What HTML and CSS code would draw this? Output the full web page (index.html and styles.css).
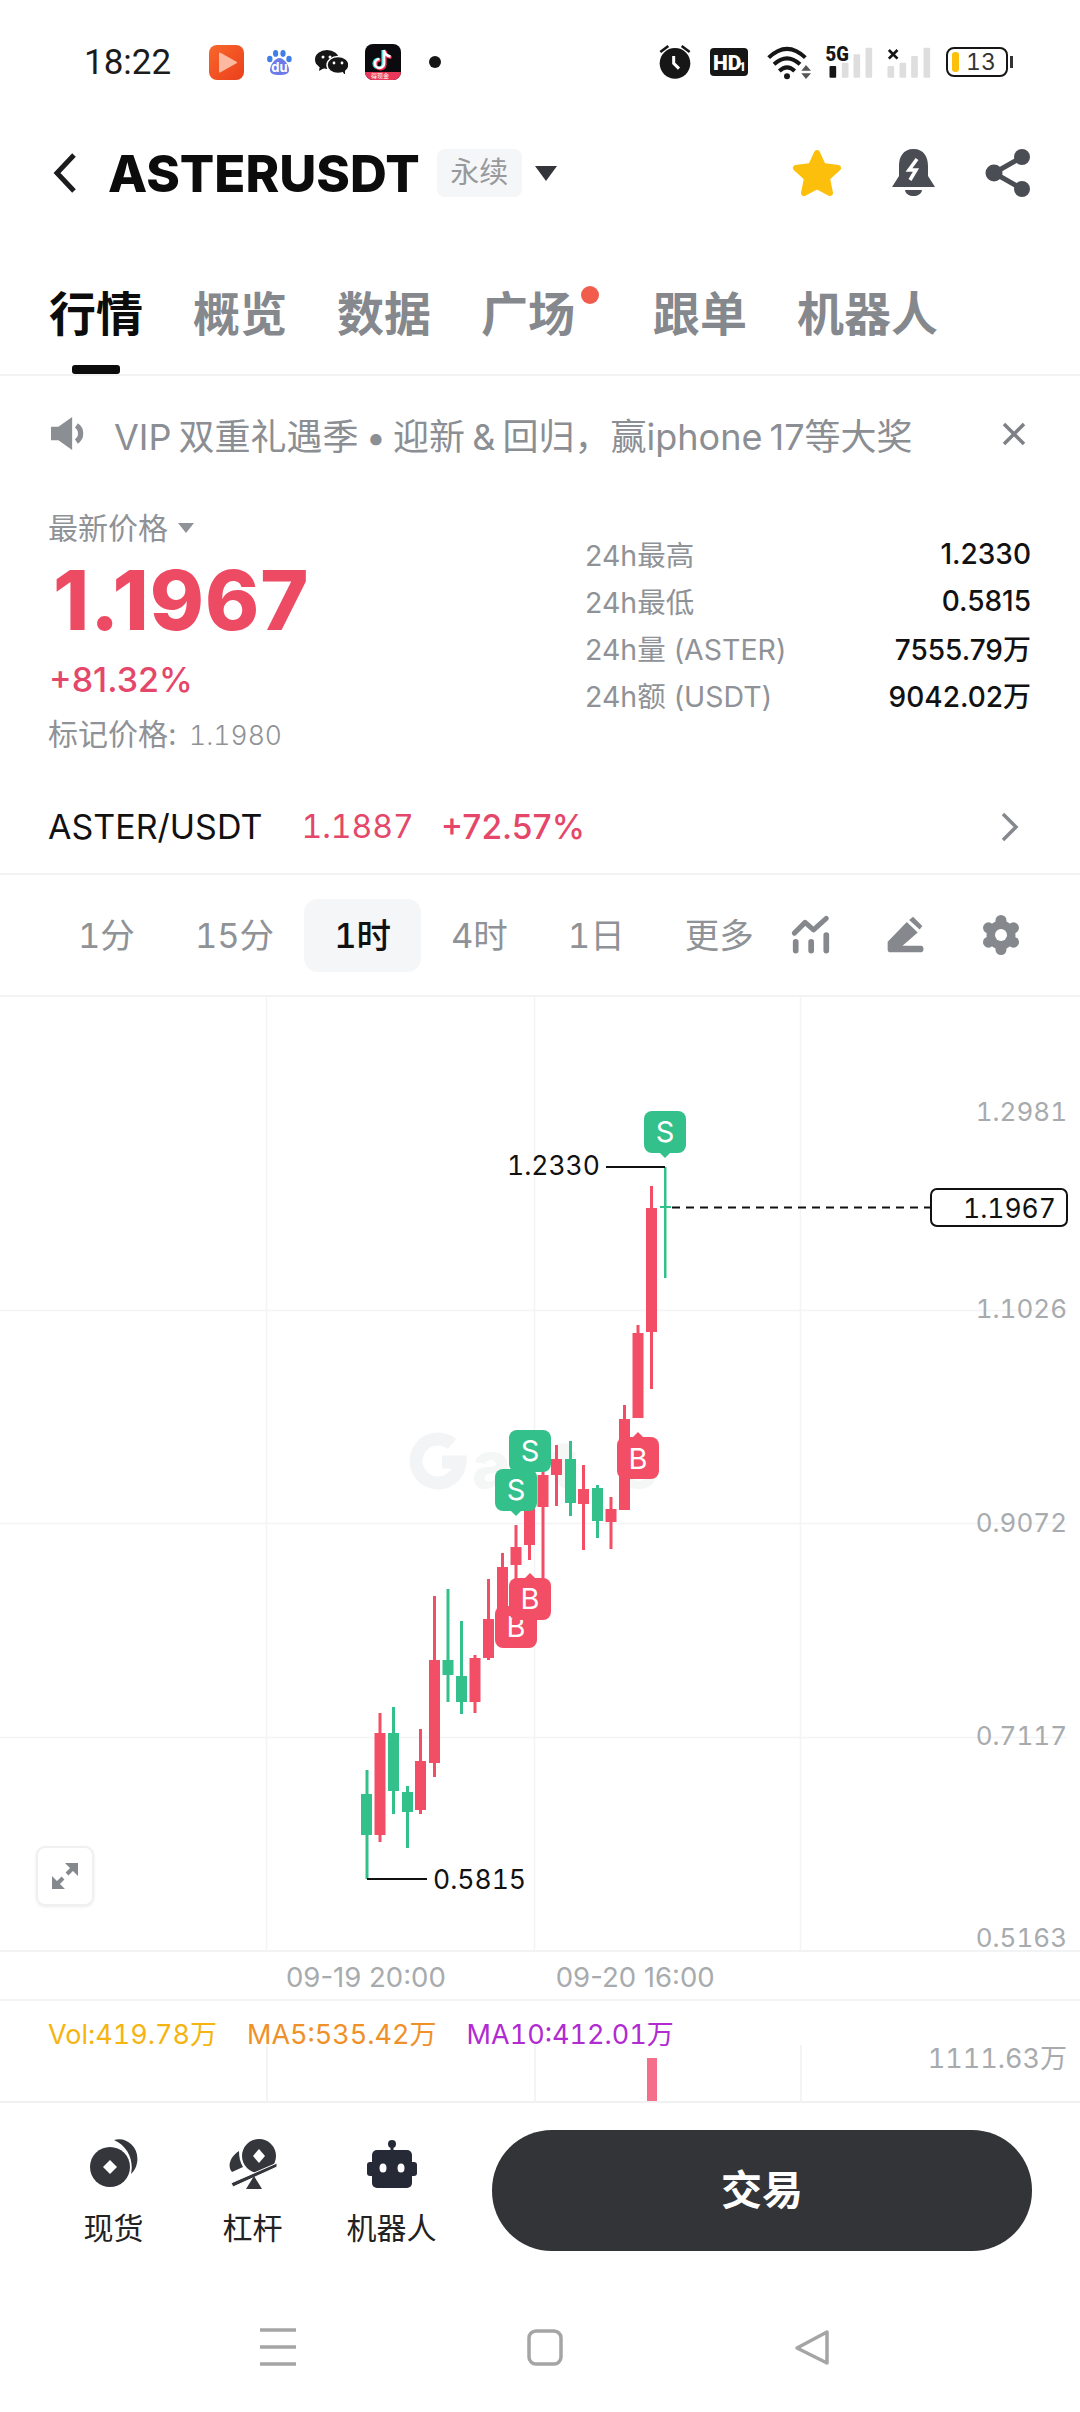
FILE: index.html
```html
<!DOCTYPE html>
<html>
<head>
    <meta charset="utf-8">
    <title>ASTERUSDT</title>
    <link rel="stylesheet" href="styles.css">
</head>
<body>
<div class="page">
    <!-- status bar -->
    <div class="status">
        <span class="clock">18:22</span>
        <svg class="app-orange" width="35" height="35" viewBox="0 0 35 35">
            <defs><linearGradient id="org" x1="0" y1="0" x2="1" y2="1"><stop offset="0" stop-color="#f9672a"/><stop offset="1" stop-color="#ea3f1c"/></linearGradient></defs>
            <rect width="35" height="35" rx="8" fill="url(#org)"/>
            <path d="M11 8.5 L27 17.5 L11 26.5 Z" fill="#fbb9a2" stroke="#fbb9a2" stroke-width="2" stroke-linejoin="round"/>
        </svg>
        <svg class="app-baidu" width="25" height="25" viewBox="0 0 25 25">
            <ellipse cx="2.8" cy="9" rx="2.7" ry="3.3" fill="#3f7ee8"/>
            <ellipse cx="8.6" cy="3.4" rx="2.6" ry="3.4" fill="#3f7ee8"/>
            <ellipse cx="16" cy="3.4" rx="2.6" ry="3.4" fill="#3f7ee8"/>
            <ellipse cx="22" cy="9" rx="2.7" ry="3.3" fill="#3f7ee8"/>
            <path d="M12.5 8 C17 8 22 15 22 20 C22 24 18 25 12.5 25 C7 25 3 24 3 20 C3 15 8 8 12.5 8 Z" fill="#6c7be8"/>
            <text class="du" x="12.5" y="22" text-anchor="middle">du</text>
        </svg>
        <svg class="app-wechat" width="33" height="24" viewBox="0 0 33 24">
            <ellipse cx="12" cy="9.5" rx="12" ry="9.5" fill="#161616"/>
            <path d="M5 15 L4 21 L11 17 Z" fill="#161616"/>
            <ellipse cx="23" cy="15" rx="11" ry="8.5" fill="#161616" stroke="#fff" stroke-width="1.5"/>
            <path d="M27 21 L30 25 L30 19 Z" fill="#161616"/>
            <circle cx="8" cy="7" r="1.5" fill="#fff"/><circle cx="15" cy="7" r="1.5" fill="#fff"/>
            <circle cx="19" cy="13" r="1.4" fill="#fff"/><circle cx="27" cy="13" r="1.4" fill="#fff"/>
        </svg>
        <svg class="app-tiktok" width="36" height="36" viewBox="0 0 36 36">
            <rect width="36" height="36" rx="8" fill="#0b0b0f"/>
            <path d="M0 28 H36 V28 A8 8 0 0 1 28 36 H8 A8 8 0 0 1 0 28 Z" fill="#e8375a"/>
            <path d="M19 6 V19.5 A4.5 4.5 0 1 1 14.5 15 M19 6 C19.5 10 22 12 25.5 12.5" fill="none" stroke="#25e4e0" stroke-width="3.2" transform="translate(-1 0)"/>
            <path d="M19 6 V19.5 A4.5 4.5 0 1 1 14.5 15 M19 6 C19.5 10 22 12 25.5 12.5" fill="none" stroke="#fe2c55" stroke-width="3.2" transform="translate(1 1)"/>
            <path d="M19 6 V19.5 A4.5 4.5 0 1 1 14.5 15 M19 6 C19.5 10 22 12 25.5 12.5" fill="none" stroke="#fff" stroke-width="2.6"/>
            <text class="tt" x="15" y="34" text-anchor="middle">得现金</text>
        </svg>
        <span class="status-dot"></span>

        <div class="status-right">
            <svg width="32" height="34" viewBox="120 75 96 102">
                <circle cx="168" cy="130" r="46" fill="#161616"/>
                <path d="M124 96 L148 78 M212 96 L188 78" stroke="#161616" stroke-width="8"/>
                <path d="M164 108 L164 130 L180 146" fill="none" stroke="#fff" stroke-width="9"/>
            </svg>
            <svg width="38" height="28" viewBox="0 0 38 28">
                <rect width="38" height="28" rx="4" fill="#161616"/>
                <text class="hd" x="3" y="21.5">HD</text>
                <text class="hd-n" x="29" y="23">1</text>
            </svg>
            <svg class="wifi" width="45" height="35" viewBox="445 70 135 105">
                <g fill="none" stroke="#161616" stroke-linecap="butt">
                    <path d="M450 108 Q505 55 560 108" stroke-width="12"/>
                    <path d="M466 128 Q505 92 544 128" stroke-width="12"/>
                    <path d="M482 148 Q505 126 528 148" stroke-width="12"/>
                </g>
                <circle cx="505" cy="164" r="9" fill="#161616"/>
                <path d="M562 130 L548 147 H577 Z M548 155 H577 L562 172 Z" fill="#555"/>
            </svg>
            <svg class="signal" width="107" height="34" viewBox="615 72 320 102">
                <text class="fiveg" x="616" y="119" textLength="70" lengthAdjust="spacingAndGlyphs">5G</text>
                <rect x="628" y="135" width="20" height="35" rx="3" fill="#161616"/>
                <g fill="#dedede">
                    <rect x="665" y="125" width="20" height="45" rx="3"/>
                    <rect x="700" y="100" width="20" height="70" rx="3"/>
                    <rect x="736" y="80" width="20" height="90" rx="3"/>
                    <rect x="802" y="135" width="20" height="35" rx="3"/>
                    <rect x="838" y="125" width="20" height="45" rx="3"/>
                    <rect x="873" y="105" width="20" height="65" rx="3"/>
                    <rect x="910" y="80" width="20" height="90" rx="3"/>
                </g>
                <path d="M806 87 L832 113 M832 87 L806 113" stroke="#161616" stroke-width="8"/>
            </svg>
            <div class="battery">
                <span class="battery-fill"></span>
                <span class="battery-num">13</span>
            </div>
            <span class="battery-nub"></span>
        </div>
    </div>

    <!-- title row -->
    <div class="topbar">
        <svg class="back" width="24" height="40" viewBox="0 0 24 40"><path d="M21 2 L4 20 L21 38" fill="none" stroke="#1c1c1e" stroke-width="5"/></svg>
        <span class="symbol">ASTERUSDT</span>
        <span class="tag">永续</span>
        <span class="tag-arrow"></span>
        <div class="topbar-icons">
            <svg width="50" height="48" viewBox="0 0 50 48"><path d="M25 4 L31 17 L46 19 L35 29 L38 44 L25 37 L12 44 L15 29 L4 19 L19 17 Z" fill="#fcbf0b" stroke="#fcbf0b" stroke-width="6" stroke-linejoin="round"/></svg>
            <svg width="43" height="48" viewBox="0 0 43 48">
                <path d="M21.5 0 C32 0 36 8 36 17 V27 L43 38 H0 L7 27 V17 C7 8 11 0 21.5 0 Z" fill="#4a4d53"/>
                <path d="M13 41 H30 C29 49 14 49 13 41 Z" fill="#4a4d53"/>
                <path d="M25 10 L17 21 H24 L18 31" fill="none" stroke="#fff" stroke-width="3.5"/>
            </svg>
            <svg width="46" height="48" viewBox="0 0 46 48">
                <path d="M37 8 L9 24 L37 40" fill="none" stroke="#4a4d53" stroke-width="5"/>
                <circle cx="37" cy="8" r="8" fill="#4a4d53"/><circle cx="9" cy="24" r="8.5" fill="#4a4d53"/><circle cx="37" cy="40" r="8" fill="#4a4d53"/>
            </svg>
        </div>
    </div>

    <!-- tabs -->
    <div class="tabs">
        <span class="tab active">行情</span>
        <span class="tab">概览</span>
        <span class="tab">数据</span>
        <span class="tab has-dot">广场</span>
        <span class="tab">跟单</span>
        <span class="tab">机器人</span>
    </div>

    <!-- notice -->
    <div class="notice">
        <svg width="37" height="33" viewBox="0 0 35 31">
            <path d="M0 9 H7 L20 0 V31 L7 22 H0 Z" fill="#8b8e93"/>
            <path d="M24 8 A9 9 0 0 1 24 23" fill="none" stroke="#8b8e93" stroke-width="5"/>
        </svg>
        <span class="notice-text">VIP 双重礼遇季 • 迎新 &amp; 回归，赢iphone 17等大奖</span>
        <svg class="notice-close" width="24" height="24" viewBox="0 0 24 24"><path d="M2 2 L22 22 M22 2 L2 22" stroke="#7d8085" stroke-width="3.5"/></svg>
    </div>

    <!-- price block -->
    <div class="market">
        <div class="price-col">
            <div class="price-label">最新价格<span class="mini-arrow"></span></div>
            <div class="price">1.1967</div>
            <div class="change">+81.32%</div>
            <div class="mark">标记价格: <span class="mark-num">1.1980</span></div>
        </div>
        <div class="stats">
            <div class="stat"><span>24h最高</span><b>1.2330</b></div>
            <div class="stat"><span>24h最低</span><b>0.5815</b></div>
            <div class="stat"><span>24h量 (ASTER)</span><b>7555.79万</b></div>
            <div class="stat"><span>24h额 (USDT)</span><b>9042.02万</b></div>
        </div>
    </div>

    <div class="pair">
        <span class="pair-name">ASTER/USDT</span>
        <span class="pair-price">1.1887</span>
        <span class="pair-change">+72.57%</span>
        <svg class="pair-go" width="18" height="30" viewBox="0 0 18 30"><path d="M2 2 L15 15 L2 28" fill="none" stroke="#85888d" stroke-width="3.5"/></svg>
    </div>

    <!-- timeframes -->
    <div class="frames">
        <span class="frame">1分</span>
        <span class="frame">15分</span>
        <span class="frame on">1时</span>
        <span class="frame">4时</span>
        <span class="frame">1日</span>
        <span class="frame">更多</span>
        <div class="frame-icons">
            <svg class="icon-ind" width="42" height="42" viewBox="90 105 125 125">
                <path d="M103 162 L135 130 L160 152 L198 118" fill="none" stroke="#85888d" stroke-width="15" stroke-linecap="round" stroke-linejoin="round"/>
                <path d="M107 188 V214 M153 188 V214 M198 168 V214" stroke="#85888d" stroke-width="17" stroke-linecap="round"/>
            </svg>
            <svg width="38" height="38" viewBox="380 110 115 115">
                <path d="M385 212 V188 L443 128 L476 160 L430 200 H486 C496 200 496 220 486 220 H392 C388 220 385 216 385 212 Z" fill="#85888d"/>
                <path d="M450 122 L462 112 L490 140 L482 151 Z" fill="#85888d"/>
            </svg>
            <svg width="38" height="40" viewBox="0 0 38 40">
                <g fill="#85888d">
                    <circle cx="19" cy="20" r="14.500"/>
                    <circle cx="19" cy="5.500" r="5.500"/>
                    <circle cx="31.500" cy="12.800" r="5.500"/>
                    <circle cx="31.500" cy="27.200" r="5.500"/>
                    <circle cx="19" cy="34.500" r="5.500"/>
                    <circle cx="6.500" cy="27.200" r="5.500"/>
                    <circle cx="6.500" cy="12.800" r="5.500"/>
                </g>
                <circle cx="19" cy="20" r="6" fill="#fff"/>
            </svg>
        </div>
    </div>

    <!-- chart, coordinates in the viewBox are page coordinates -->
    <div class="chart">
        <svg class="chart-svg" width="1080" height="955" viewBox="0 996 1080 955">
            <g class="grid">
                <path d="M266.500 996 V1951 M534.500 996 V1951 M800.500 996 V1951"/>
                <path d="M0 1309.500 H1067 M0 1522.500 H1067 M0 1736.500 H1067"/>
            </g>
            <g class="watermark">
                <path d="M452 1443 A22 22 0 1 0 460 1461 H442" fill="none" stroke-width="13"/>
                <text class="wm-text" x="472" y="1487" textLength="186">ate</text>
            </g>

            <g class="axis">
                <text x="1067" y="1120">1.2981</text>
                <text x="1067" y="1317">1.1026</text>
                <text x="1067" y="1531">0.9072</text>
                <text x="1067" y="1744">0.7117</text>
                <text x="1067" y="1946">0.5163</text>
            </g>

            <g class="dn"><rect x="365.500" y="1769" width="3" height="109"/><rect x="361" y="1793" width="11" height="41"/></g>
            <g class="up"><rect x="378.500" y="1712" width="3" height="129"/><rect x="374.500" y="1732" width="11" height="102"/></g>
            <g class="dn"><rect x="392" y="1706" width="3" height="107"/><rect x="388" y="1732" width="11" height="58"/></g>
            <g class="dn"><rect x="406" y="1785" width="3" height="62"/><rect x="402" y="1791" width="11" height="20"/></g>
            <g class="up"><rect x="419" y="1728" width="3" height="85"/><rect x="415" y="1760" width="11" height="49"/></g>
            <g class="up"><rect x="433" y="1595" width="3" height="181"/><rect x="429" y="1659" width="11" height="103"/></g>
            <g class="dn"><rect x="446.500" y="1588" width="3" height="113"/><rect x="442.500" y="1659" width="11" height="15"/></g>
            <g class="dn"><rect x="460" y="1620" width="3" height="93"/><rect x="456" y="1675" width="11" height="26"/></g>
            <g class="up"><rect x="473.500" y="1654" width="3" height="58"/><rect x="469.500" y="1657" width="11" height="44"/></g>
            <g class="up"><rect x="487" y="1578" width="3" height="81"/><rect x="483" y="1618" width="11" height="39"/></g>
            <g class="up"><rect x="501" y="1552" width="3" height="70"/><rect x="497" y="1566" width="11" height="54"/></g>
            <g class="up"><rect x="514.500" y="1524" width="3" height="56"/><rect x="510.500" y="1546" width="11" height="18"/></g>
            <g class="up"><rect x="528" y="1490" width="3" height="69"/><rect x="524" y="1490" width="11" height="54"/></g>
            <g class="up"><rect x="541.500" y="1470" width="3" height="110"/><rect x="537.500" y="1474" width="11" height="32"/></g>
            <g class="up"><rect x="555" y="1444" width="3" height="61"/><rect x="551" y="1458" width="11" height="16"/></g>
            <g class="dn"><rect x="569" y="1440" width="3" height="75"/><rect x="565" y="1458" width="11" height="44"/></g>
            <g class="up"><rect x="582" y="1464" width="3" height="85"/><rect x="578" y="1488" width="11" height="15"/></g>
            <g class="dn"><rect x="596" y="1484" width="3" height="53"/><rect x="592" y="1487" width="11" height="33"/></g>
            <g class="up"><rect x="609.500" y="1496" width="3" height="52"/><rect x="605.500" y="1508" width="11" height="13"/></g>
            <g class="up"><rect x="623" y="1404" width="3" height="105"/><rect x="619" y="1418" width="11" height="91"/></g>
            <g class="up"><rect x="636.500" y="1324" width="3" height="93"/><rect x="632.500" y="1332" width="11" height="85"/></g>
            <g class="up"><rect x="650" y="1185" width="3" height="203"/><rect x="646" y="1207" width="11" height="124"/></g>
            <g class="dn"><rect x="664" y="1166" width="2.500" height="111"/></g>

            <path class="last-line" d="M672 1206.500 H930"/>
            <rect class="dn-rect" x="660" y="1205" width="11" height="2"/>

            <path class="hi-lo" d="M606 1166 H665"/>
            <path class="hi-lo" d="M367 1878 H427"/>
            <text class="hi-lo-text" x="600" y="1174" text-anchor="end">1.2330</text>
            <text class="hi-lo-text" x="433" y="1888">0.5815</text>

            <rect class="last-box" x="931" y="1188" width="136" height="37" rx="6"/>
            <text class="last-text" x="1056" y="1217" text-anchor="end">1.1967</text>

            <!-- trade markers -->
            <g class="dn mk"><rect x="509" y="1429" width="42" height="42" rx="8"/><text x="530" y="1460">S</text></g>
            <g class="dn mk"><rect x="495" y="1468" width="42" height="42" rx="8"/><path d="M510 1509 L516 1515 L522 1509 Z"/><text x="516" y="1499">S</text></g>
            <g class="dn mk"><rect x="644" y="1110" width="42" height="42" rx="8"/><path d="M659 1151 L665 1157 L671 1151 Z"/><text x="665" y="1141">S</text></g>
            <g class="up mk"><rect x="617" y="1436" width="42" height="42" rx="8"/><path d="M632 1437 L638 1431 L644 1437 Z"/><text x="638" y="1468">B</text></g>
            <g class="up mk"><rect x="495" y="1605" width="42" height="42" rx="8"/><text x="516" y="1636">B</text></g>
            <g class="up mk"><rect x="509" y="1577" width="42" height="42" rx="8"/><path d="M524 1578 L530 1572 L536 1578 Z"/><text x="530" y="1608">B</text></g>
        </svg>
        <div class="expand">
            <svg width="28" height="28" viewBox="0 0 28 28">
                <path d="M16 12 L24 4 M12 16 L4 24" stroke="#85888d" stroke-width="4"/>
                <path d="M14 1 H27 V14 Z M1 14 V27 H14 Z" fill="#85888d"/>
            </svg>
        </div>
    </div>

    <div class="time-axis">
        <span class="t1">09-19 20:00</span>
        <span class="t2">09-20 16:00</span>
    </div>

    <div class="vol">
        <div class="vol-legend">
            <span class="vol-a">Vol:419.78万</span>
            <span class="vol-b">MA5:535.42万</span>
            <span class="vol-c">MA10:412.01万</span>
        </div>
        <span class="vol-max">1111.63万</span>
        <span class="vol-bar" style="height:43px"></span>
        <span class="vline v1"></span><span class="vline v2"></span><span class="vline v3"></span>
    </div>

    <!-- bottom actions -->
    <div class="actions">
        <div class="tool">
            <div class="tool-icon">
                <svg width="48" height="50" viewBox="0 0 48 50">
                    <circle cx="20" cy="28" r="20" fill="#34363b"/>
                    <path d="M20 21 L27 28 L20 35 L13 28 Z" fill="#fff"/>
                    <path d="M24 1 C36 -3 50 8 47 24 C46 29 44 32 41 35 C44 22 38 7 24 1 Z" fill="#34363b"/>
                </svg>
            </div>
            <span class="tool-name">现货</span>
        </div>
        <div class="tool">
            <div class="tool-icon">
                <svg width="48" height="50" viewBox="0 0 48 50">
                    <ellipse cx="30" cy="17" rx="17" ry="17" fill="#34363b"/>
                    <path d="M30 10 L36 17 L30 24 L24 17 Z" fill="#fff"/>
                    <path d="M10 12 C1 18 -2 27 3 33 L14 28 C11 23 10 18 10 12 Z" fill="#34363b"/>
                    <path d="M2 44 L48 24 L48 28 L4 48 Z" fill="#34363b" stroke="#fff" stroke-width="1"/>
                    <path d="M25 37 L33 50 H17 Z" fill="#34363b"/>
                </svg>
            </div>
            <span class="tool-name">杠杆</span>
        </div>
        <div class="tool">
            <div class="tool-icon">
                <svg width="50" height="48" viewBox="0 0 50 48">
                    <circle cx="25" cy="4" r="4" fill="#252a36"/>
                    <rect x="23.500" y="5" width="3" height="6" fill="#252a36"/>
                    <rect x="5" y="10" width="40" height="38" rx="5" fill="#252a36"/>
                    <rect x="0" y="22" width="50" height="14" rx="3" fill="#252a36"/>
                    <ellipse cx="16" cy="28" rx="3.500" ry="4.500" fill="#fff"/>
                    <ellipse cx="34" cy="28" rx="3.500" ry="4.500" fill="#fff"/>
                </svg>
            </div>
            <span class="tool-name">机器人</span>
        </div>
        <div class="trade">交易</div>
    </div>

    <!-- system nav -->
    <div class="sysnav">
        <svg width="36" height="38" viewBox="0 0 36 38"><path d="M0 2 H36 M0 19 H36 M0 36 H36" stroke="#a5a5a5" stroke-width="3.500"/></svg>
        <svg width="36" height="37" viewBox="0 0 36 37"><rect x="2" y="2" width="32" height="33" rx="7" fill="none" stroke="#a5a5a5" stroke-width="3.500"/></svg>
        <svg width="36" height="37" viewBox="0 0 36 37"><path d="M33 3 V34 L3 19 Z" fill="none" stroke="#a5a5a5" stroke-width="3.500" stroke-linejoin="round"/></svg>
    </div>
</div>
</body>
</html>
```

FILE: styles.css
```css
* {
    box-sizing: border-box;
}

body {
    margin: 0;
    background-color: #fff;
    font-family: Inter, "Noto Sans CJK SC", sans-serif;
    color: #111;
}

.page {
    width: 1080px;
    height: 2412px;
    overflow: hidden;
}

/* status bar */
.status {
    height: 124px;
    display: flex;
    align-items: center;
    padding-left: 84px;
}
.clock {
    width: 125px;
    font-family: Roboto, sans-serif;
    font-size: 35px;
    color: #1b1b1b;
}
.app-baidu { margin-left: 23px; }
.app-wechat { margin-left: 23px; }
.app-tiktok { margin-left: 17px; }
.du { font-size: 13px; font-weight: 700; fill: #fff; }
.tt { font-size: 6px; fill: #fff; }
.status-dot {
    width: 12px;
    height: 12px;
    margin-left: 28px;
    border-radius: 50%;
    background-color: #161616;
}
.status-right {
    margin-left: auto;
    margin-right: 67px;
    display: flex;
    align-items: center;
    gap: 19px;
}
.status-right svg {
    overflow: visible;
}
.wifi {
    margin-right: -6px;
}
.hd { font-family: Roboto, sans-serif; font-size: 21px; font-weight: 900; fill: #fff; }
.hd-n { font-family: Roboto, sans-serif; font-size: 12px; font-weight: 900; fill: #fff; }
.fiveg { font-family: Roboto, sans-serif; font-size: 60px; font-weight: 900; fill: #161616; }
.battery {
    width: 62px;
    height: 30px;
    margin-left: -5px;
    padding-left: 4px;
    border: 2.5px solid #161616;
    border-radius: 8px;
    display: flex;
    align-items: center;
}
.battery-fill {
    width: 7px;
    height: 20px;
    border-radius: 3px;
    background-color: #fcbf0b;
}
.battery-num {
    margin-left: 7px;
    font-size: 23px;
    font-variant-numeric: tabular-nums;
    color: #333;
}
.battery-nub {
    width: 3px;
    height: 12px;
    margin-left: -17px;
    background-color: #333;
}

/* title row */
.topbar {
    height: 96px;
    display: flex;
    align-items: center;
    padding: 2px 0 0 53px;
}
.symbol {
    margin-left: 31px;
    font-size: 51px;
    font-weight: 800;
    color: #0c0c0c;
}
.tag {
    width: 85px;
    height: 48px;
    margin-left: 17px;
    border-radius: 8px;
    background-color: #f5f6f7;
    color: #98999c;
    font-size: 29px;
    text-align: center;
    line-height: 48px;
}
.tag-arrow {
    margin-left: 13px;
    border-left: 11px solid transparent;
    border-right: 11px solid transparent;
    border-top: 15px solid #33353a;
}
.topbar-icons {
    margin-left: auto;
    margin-right: 49px;
    display: flex;
    align-items: center;
    gap: 50px;
}

/* tabs */
.tabs {
    height: 156px;
    padding: 63px 0 0 49px;
    display: flex;
    align-items: flex-start;
    gap: 50px;
    border-bottom: 2px solid #f2f3f4;
}
.tab {
    position: relative;
    font-size: 47px;
    line-height: 62px;
    font-weight: 700;
    color: #85888d;
    white-space: nowrap;
}
.tab.active {
    color: #0c0c0c;
}
.tab.active::after {
    content: "";
    position: absolute;
    left: 23px;
    top: 82px;
    width: 48px;
    height: 9px;
    border-radius: 3px;
    background-color: #0c0c0c;
}
.has-dot {
    margin-right: 28px;
}
.has-dot::after {
    content: "";
    position: absolute;
    left: 100px;
    top: 3px;
    width: 18px;
    height: 18px;
    border-radius: 50%;
    background-color: #f25c4d;
}

/* notice */
.notice {
    height: 118px;
    padding: 0 54px 3px 51px;
    display: flex;
    align-items: center;
}
.notice-text {
    margin-left: 26px;
    font-size: 36px;
    word-spacing: -3px;
    color: #8b8e93;
    white-space: nowrap;
}
.notice-close {
    margin-left: auto;
}

/* price block */
.market {
    height: 286px;
    padding: 0 49px 0 48px;
    display: flex;
    justify-content: space-between;
}
.price-col {
    padding-top: 14px;
}
.price-label {
    font-size: 30px;
    line-height: 40px;
    color: #8f9296;
    display: flex;
    align-items: center;
}
.mini-arrow {
    margin-left: 10px;
    border-left: 8px solid transparent;
    border-right: 8px solid transparent;
    border-top: 10px solid #8f9296;
}
.price {
    margin: 3px 0 0 5px;
    font-size: 82px;
    line-height: 100px;
    font-weight: 800;
    letter-spacing: 1px;
    color: #ed4b64;
}
.change {
    margin: 7px 0 0 1px;
    font-size: 34px;
    line-height: 44px;
    font-weight: 500;
    color: #e5476a;
}
.mark {
    margin-top: 12px;
    font-size: 30px;
    line-height: 40px;
    color: #8f9296;
}
.mark-num {
    margin-left: 4px;
    font-size: 26.500px;
    font-weight: 300;
    font-variant-numeric: tabular-nums;
}
.stats {
    width: 446px;
    margin-top: 36px;
}
.stat {
    height: 47px;
    display: flex;
    justify-content: space-between;
    align-items: center;
    font-size: 28.500px;
    color: #8f9296;
}
.stat b {
    font-weight: 500;
    font-size: 28px;
    color: #111;
}

/* pair row */
.pair {
    height: 95px;
    padding: 0 61px 0 48px;
    display: flex;
    align-items: center;
    font-size: 34px;
    border-bottom: 2px solid #f2f3f4;
}
.pair-price {
    margin-left: 39px;
    font-size: 32px;
    font-variant-numeric: tabular-nums;
    color: #e5476a;
}
.pair-change {
    margin-left: 27px;
    font-size: 33.500px;
    font-weight: 500;
    color: #e5476a;
}
.pair-go {
    margin-left: auto;
}

/* timeframes */
.frames {
    height: 122px;
    padding: 0 60px 0 48px;
    display: flex;
    align-items: center;
    border-bottom: 2px solid #f2f3f4;
}
.frame {
    height: 73px;
    padding: 0 30px;
    border-radius: 14px;
    font-size: 34.500px;
    line-height: 73px;
    font-variant-numeric: tabular-nums;
    color: #8f9296;
    white-space: nowrap;
}
.frame.on {
    background-color: #f5f6f7;
    color: #111;
    font-weight: 500;
}
.frame-icons {
    margin-left: auto;
    flex: none;
    display: flex;
    align-items: center;
    gap: 58px;
}
.icon-ind {
    margin-right: -4px;
}

/* chart */
.chart {
    position: relative;
    height: 955px;
    border-bottom: 2px solid #f2f3f4;
}
.chart-svg {
    display: block;
    overflow: visible;
}
.grid path {
    fill: none;
    stroke: #f3f4f5;
    stroke-width: 1.500;
}
.watermark path { stroke: #f3f4f5; }
.wm-text {
    font-size: 66px;
    font-weight: 800;
    fill: #f5f6f6;
}
.axis text {
    font-size: 26px;
    font-variant-numeric: tabular-nums;
    fill: #a8abae;
    text-anchor: end;
}
.up { fill: #f24e66; }
.dn { fill: #33c08a; }
.dn-rect { fill: #33c08a; }
.mk text {
    font-size: 29px;
    fill: #fff;
    text-anchor: middle;
}
.last-line {
    fill: none;
    stroke: #111;
    stroke-width: 2;
    stroke-dasharray: 8 6;
}
.hi-lo {
    fill: none;
    stroke: #111;
    stroke-width: 2;
}
.hi-lo-text,
.last-text {
    font-size: 26.500px;
    font-variant-numeric: tabular-nums;
    fill: #111;
}
.last-box {
    fill: #fff;
    stroke: #111;
    stroke-width: 2;
}
.expand {
    position: absolute;
    left: 36px;
    top: 849px;
    width: 58px;
    height: 60px;
    border: 2px solid #eff0f1;
    border-radius: 9px;
    background-color: #fff;
    box-shadow: 0 1px 3px rgba(0, 0, 0, 0.08);
    display: flex;
    align-items: center;
    justify-content: center;
}

/* time axis */
.time-axis {
    height: 49px;
    display: flex;
    align-items: center;
    padding: 2px 0 0 286px;
    font-size: 27.500px;
    color: #a8abae;
    border-bottom: 2px solid #f2f3f4;
}
.t2 {
    margin-left: 110px;
}

/* volume */
.vol {
    position: relative;
    height: 102px;
    border-bottom: 2px solid #f0f1f2;
}
.vol-legend {
    padding: 12px 0 0 48px;
    display: flex;
    gap: 30px;
    font-size: 27px;
    line-height: 44px;
    font-variant-numeric: tabular-nums;
}
.vol-a { color: #f5b40f; }
.vol-b { color: #f09028; }
.vol-c { color: #b02bd1; }
.vol-max {
    position: absolute;
    right: 13px;
    top: 38px;
    font-size: 27px;
    line-height: 40px;
    font-variant-numeric: tabular-nums;
    color: #a8abae;
}
.vol-bar {
    position: absolute;
    left: 647px;
    bottom: 0;
    width: 10px;
    background-color: #f4708a;
}
.vline {
    position: absolute;
    top: 44px;
    bottom: 0;
    width: 1.500px;
    background-color: #f3f4f5;
}
.v1 { left: 266px; }
.v2 { left: 534px; }
.v3 { left: 800px; }

/* bottom actions */
.actions {
    height: 178px;
    padding: 27px 48px 30px 44px;
    display: flex;
    align-items: flex-start;
}
.tool {
    width: 139px;
    display: flex;
    flex-direction: column;
    align-items: center;
}
.tool-icon {
    height: 68px;
    display: flex;
    align-items: center;
}
.tool-name {
    margin-top: 10px;
    font-size: 30px;
    line-height: 40px;
    color: #222;
}
.trade {
    flex: 1;
    height: 121px;
    margin-left: 31px;
    border-radius: 60px;
    background-color: #323437;
    color: #fff;
    font-size: 41px;
    font-weight: 700;
    line-height: 121px;
    text-align: center;
}

/* system nav */
.sysnav {
    height: 132px;
    padding-left: 260px;
    display: flex;
    align-items: center;
    gap: 231px;
}
```
